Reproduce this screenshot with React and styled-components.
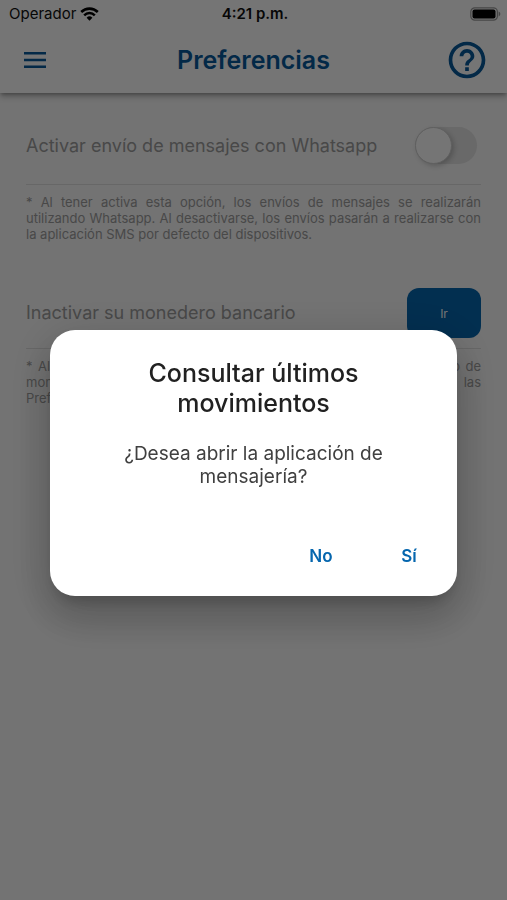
import React, { useState } from 'react';
import styled, { ThemeProvider, createGlobalStyle } from 'styled-components';

const theme = {
  blue: '#0566ae',
  navy: '#07599c',
  text: '#9e9e9e',
  line: '#e0e0e0',
  font: "Inter, 'Open Sans', sans-serif",
};

const GlobalStyle = createGlobalStyle`
  *, *::before {
    box-sizing: border-box;
  }
  body {
    margin: 0;
    background: #fafafa;
    font-family: ${p => p.theme.font};
  }
  button, input {
    font-family: inherit;
  }
`;

const Screen = styled.div`
  min-height: 100vh;
`;

const Header = styled.header`
  background: #fff;
  box-shadow: 0 2px 4px -1px rgba(0, 0, 0, 0.3), 0 4px 6px rgba(0, 0, 0, 0.2);
`;

const StatusBar = styled.div`
  display: grid;
  grid-template-columns: 1fr auto 1fr;
  align-items: center;
  height: 27px;
  padding: 0 6px 0 9px;
  font-size: 15px;
  line-height: 27px;
  color: #111;
`;

const Carrier = styled.span`
  display: flex;
  align-items: center;
  gap: 4px;
`;

const Clock = styled.span`
  font-weight: 600;
`;

const Battery = styled.svg`
  justify-self: end;
`;

const AppBar = styled.div`
  display: grid;
  grid-template-columns: 1fr auto 1fr;
  align-items: center;
  height: 66px;
  padding: 0 18px;
`;

const IconButton = styled.button`
  display: flex;
  justify-self: ${p => (p.$end ? 'end' : 'start')};
  padding: 0;
  border: 0;
  background: none;
  color: ${p => p.theme.navy};
`;

const Title = styled.h1`
  margin: 0;
  font-size: 25px;
  font-weight: 600;
  line-height: 30px;
  color: ${p => p.theme.navy};
`;

const Content = styled.main`
  display: flex;
  flex-direction: column;
  gap: 36px;
  padding: 14px 26px;
`;

const Row = styled.div`
  display: flex;
  align-items: center;
  justify-content: space-between;
  padding: ${p => (p.$compact ? '10px' : '20px')} 0;
  border-bottom: 1px solid ${p => p.theme.line};
`;

const Label = styled.label`
  font-size: 18px;
  line-height: 24px;
  color: ${p => p.theme.text};
`;

const Note = styled.p`
  margin: 9px 0 0;
  font-size: 13px;
  line-height: 16px;
  text-align: justify;
  color: ${p => p.theme.text};
`;

const Switch = styled.input`
  appearance: none;
  display: flex;
  flex: none;
  width: 62px;
  height: 37px;
  margin: 0 4px 0 0;
  border-radius: 19px;
  background: #e4e4e4;

  &::before {
    content: '';
    width: 37px;
    height: 37px;
    border: 1px solid #d0d0d0;
    border-radius: 50%;
    background: #fff;
    box-shadow: 2px 2px 5px rgba(0, 0, 0, 0.2);
  }
  &:checked {
    justify-content: flex-end;
    background: ${p => p.theme.blue};
  }
`;

const GoButton = styled.button`
  width: 74px;
  height: 50px;
  padding: 0;
  border: 0;
  border-radius: 12px;
  background: ${p => p.theme.blue};
  color: #fff;
  font-size: 12px;
`;

const Scrim = styled.div`
  position: fixed;
  inset: 0;
  display: flex;
  align-items: center;
  justify-content: center;
  padding: 26px 50px 0;
  background: rgba(0, 0, 0, 0.54);
`;

const Dialog = styled.section`
  width: 100%;
  max-width: 480px;
  padding: 28px 8px 16px;
  border-radius: 25px;
  background: #fff;
  box-shadow: 0 11px 15px -7px rgba(0, 0, 0, 0.2),
    0 24px 38px 3px rgba(0, 0, 0, 0.14), 0 9px 46px 8px rgba(0, 0, 0, 0.12);
  text-align: center;
`;

const DialogTitle = styled.h2`
  margin: 0 72px;
  font-size: 25px;
  font-weight: 500;
  line-height: 30px;
  color: #212121;
`;

const DialogText = styled.p`
  margin: 24px 56px 44px;
  font-size: 19px;
  line-height: 23px;
  color: #404040;
`;

const Actions = styled.div`
  display: flex;
  justify-content: flex-end;
  gap: 8px;
`;

const Action = styled.button`
  width: 80px;
  height: 48px;
  padding: 0;
  border: 0;
  background: none;
  color: ${p => p.theme.blue};
  font-size: 17px;
  font-weight: 600;
`;

const WifiIcon = () => (
  <svg width="19" height="14" viewBox="0 0 19 14" fill="none" stroke="#000">
    <path d="M1.2 5a11.8 11.8 0 0 1 16.6 0" strokeWidth="2.6" />
    <path d="M4.2 8.3a7.5 7.5 0 0 1 10.6 0" strokeWidth="2.5" />
    <path d="M9.5 13.7 6.6 10.8a4.1 4.1 0 0 1 5.8 0z" fill="#000" stroke="none" />
  </svg>
);

const BatteryIcon = () => (
  <Battery width="31" height="14" viewBox="0 0 31 14">
    <rect x="0.8" y="0.8" width="26.6" height="12.4" rx="4" fill="none" stroke="#999" strokeWidth="1.2" />
    <rect x="2.5" y="2.5" width="23" height="9" rx="2" />
    <path d="M28.6 4.6c2.3.8 2.3 4 0 4.8z" fill="#999" />
  </Battery>
);

const MenuIcon = () => (
  <svg width="34" height="28" viewBox="0 0 34 28" fill="currentColor">
    <path d="M6 6h22v2.5H6zM6 12.7h22v2.5H6zM6 19.4h22v2.5H6z" />
  </svg>
);

const HelpIcon = () => (
  <svg width="44" height="44" viewBox="0 0 24 24" fill="currentColor">
    <path d="M11 18h2v-2h-2v2zm1-16C6.48 2 2 6.48 2 12s4.48 10 10 10 10-4.48 10-10S17.52 2 12 2zm0 18c-4.41 0-8-3.59-8-8s3.59-8 8-8 8 3.59 8 8-3.59 8-8 8zm0-14c-2.21 0-4 1.79-4 4h2c0-1.1.9-2 2-2s2 .9 2 2c0 2-3 1.75-3 5h2c0-2.25 3-2.5 3-5 0-2.21-1.79-4-4-4z" />
  </svg>
);

const App = () => {
  const [whatsapp, setWhatsapp] = useState(false);
  const [open, setOpen] = useState(true);

  return (
    <ThemeProvider theme={theme}>
      <GlobalStyle />
      <Screen>
        <Header>
          <StatusBar>
            <Carrier>
              Operador
              <WifiIcon />
            </Carrier>
            <Clock>4:21 p.m.</Clock>
            <BatteryIcon />
          </StatusBar>
          <AppBar>
            <IconButton type="button" aria-label="Menú">
              <MenuIcon />
            </IconButton>
            <Title>Preferencias</Title>
            <IconButton type="button" aria-label="Ayuda" $end>
              <HelpIcon />
            </IconButton>
          </AppBar>
        </Header>
        <Content>
          <section>
            <Row>
              <Label htmlFor="whatsapp">Activar envío de mensajes con Whatsapp</Label>
              <Switch
                id="whatsapp"
                type="checkbox"
                role="switch"
                checked={whatsapp}
                onChange={e => setWhatsapp(e.target.checked)}
              />
            </Row>
            <Note>
              * Al tener activa esta opción, los envíos de mensajes se realizarán utilizando
              Whatsapp. Al desactivarse, los envíos pasarán a realizarse con la aplicación SMS
              por defecto del dispositivos.
            </Note>
          </section>
          <section>
            <Row $compact>
              <Label htmlFor="wallet">Inactivar su monedero bancario</Label>
              <GoButton id="wallet" type="button" onClick={() => setOpen(true)}>
                Ir
              </GoButton>
            </Row>
            <Note>
              * Al inactivar su monedero bancario, se eliminarán los datos de uso de
              monedero en este dispositivo y deberá activarlo de nuevo desde las
              Preferencias.
            </Note>
          </section>
        </Content>
      </Screen>
      {open && (
        <Scrim>
          <Dialog role="dialog" aria-modal="true" aria-labelledby="dialog-title">
            <DialogTitle id="dialog-title">Consultar últimos movimientos</DialogTitle>
            <DialogText>¿Desea abrir la aplicación de mensajería?</DialogText>
            <Actions>
              <Action type="button" onClick={() => setOpen(false)}>
                No
              </Action>
              <Action type="button" onClick={() => setOpen(false)}>
                Sí
              </Action>
            </Actions>
          </Dialog>
        </Scrim>
      )}
    </ThemeProvider>
  );
};

export default App;
